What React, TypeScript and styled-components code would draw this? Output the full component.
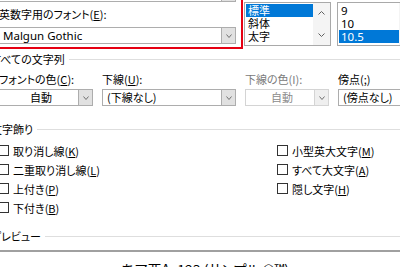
import * as React from "react"
import styled, { createGlobalStyle } from "styled-components"

const GlobalStyle = createGlobalStyle`
  html, body {
    margin: 0;
    padding: 0;
    background: #ffffff;
  }
  body {
    font-family: "Noto Sans CJK JP", "Noto Sans", sans-serif;
    font-size: 11px;
    color: #000000;
  }
`

const Viewport = styled.div`
  width: 400px;
  height: 267px;
  overflow: hidden;
  background: #ffffff;
`

const Dialog = styled.div`
  margin-left: -14px;
  width: 440px;
  line-height: 14px;
  font-feature-settings: "palt";
`

const FontRow = styled.div`
  display: flex;
  align-items: flex-start;
  margin-top: -20px;
`

const RedFrame = styled.div`
  margin-left: 6px;
  width: 237px;
  padding: 3px 5px;
  border: 2px solid #e60012;
  display: flex;
  flex-direction: column;
`

const Label = styled.div<{ $disabled?: boolean; $gap?: number }>`
  height: 14px;
  margin-top: ${(p) => p.$gap ?? 0}px;
  white-space: nowrap;
  color: ${(p) => (p.$disabled ? "#7a7a7a" : "#000000")};
`

const Key = styled.span`
  text-decoration: underline;
  text-underline-offset: 1px;
`

const Combo = styled.div<{ $disabled?: boolean; $gap?: number }>`
  box-sizing: border-box;
  height: 17px;
  display: flex;
  margin-top: ${(p) => p.$gap ?? 0}px;
  border: 1px solid ${(p) => (p.$disabled ? "#d4d4d4" : "#adadad")};
  background: #ffffff;
`

const ComboValue = styled.div<{ $center?: boolean; $disabled?: boolean }>`
  flex: 1;
  padding-left: 4px;
  line-height: 15px;
  white-space: nowrap;
  overflow: hidden;
  text-align: ${(p) => (p.$center ? "center" : "left")};
  color: ${(p) => (p.$disabled ? "#8c8c8c" : "#000000")};
`

const LatinValue = styled(ComboValue)`
  font-family: "Noto Sans", "Noto Sans CJK JP", sans-serif;
  font-size: 11.5px;
  padding-left: 3px;
`

const ComboButton = styled.div<{ $disabled?: boolean }>`
  width: 13px;
  display: flex;
  align-items: center;
  justify-content: center;
  border-left: 1px solid ${(p) => (p.$disabled ? "#d4d4d4" : "#adadad")};
  background: ${(p) => (p.$disabled ? "#efefef" : "#e1e1e1")};
`

const ListBox = styled.div<{ $width: number; $gap: number }>`
  box-sizing: border-box;
  width: ${(p) => p.$width}px;
  height: 44px;
  margin-top: 22px;
  margin-left: ${(p) => p.$gap}px;
  display: flex;
  border: 1px solid #a9a9a9;
  background: #ffffff;
`

const ListItems = styled.div`
  flex: 1;
  padding: 1px 0 0 1px;
`

const ListItem = styled.div<{ $selected?: boolean; $latin?: boolean }>`
  height: 13px;
  line-height: 13px;
  padding-left: 2px;
  white-space: nowrap;
  font-family: ${(p) =>
    p.$latin ? `"Noto Sans", sans-serif` : `"Noto Sans CJK JP", sans-serif`};
  font-size: ${(p) => (p.$latin ? "11.5px" : "11px")};
  background: ${(p) => (p.$selected ? "#0078d7" : "transparent")};
  color: ${(p) => (p.$selected ? "#ffffff" : "#000000")};
`

const ScrollBar = styled.div`
  width: 17px;
  display: flex;
  flex-direction: column;
  align-items: center;
  justify-content: space-between;
  padding: 8px 0 8px;
  background: #f4f4f4;
`

const GroupHeader = styled.div<{ $gap: number }>`
  display: flex;
  align-items: center;
  gap: 4px;
  height: 14px;
  margin-top: ${(p) => p.$gap}px;
  padding-left: 5px;
  white-space: nowrap;

  &::after {
    content: "";
    flex: 1;
    height: 1px;
    background: #dedede;
  }
`

const FieldGrid = styled.div`
  display: grid;
  grid-template-columns: 94px 134px 84px 80px;
  column-gap: 9px;
  margin-top: 6px;
  padding-left: 13px;
`

const Field = styled.div`
  display: flex;
  flex-direction: column;
  gap: 3px;
`

const EffectsRow = styled.div`
  display: flex;
  margin-top: 5px;
  padding-left: 12px;
`

const EffectsColumn = styled.div<{ $width?: number }>`
  width: ${(p) => (p.$width ? `${p.$width}px` : "auto")};
  display: flex;
  flex-direction: column;
`

const Check = styled.label`
  height: 19px;
  display: flex;
  align-items: center;
  gap: 4px;
  white-space: nowrap;
`

const CheckBox = styled.span`
  box-sizing: border-box;
  width: 11px;
  height: 11px;
  border: 1px solid #333333;
  background: #ffffff;
`

const Preview = styled.div`
  width: 412px;
  margin: 7px 0 0 13px;
  padding-top: 10px;
  height: 40px;
  border-top: 2px solid #a0a0a0;
  text-align: center;
  font-size: 14px;
  line-height: 14px;
`

const Chevron: React.FC<{ up?: boolean; small?: boolean }> = ({ up, small }) => {
  const w = small ? 6 : 7
  return (
    <svg width={w} height={4} viewBox={`0 0 ${w} 4`}>
      <path
        d={
          up
            ? `M0.5 3.5 L${w / 2} 0.5 L${w - 0.5} 3.5`
            : `M0.5 0.5 L${w / 2} 3.5 L${w - 0.5} 0.5`
        }
        fill="none"
        stroke={small ? "#707070" : "#606060"}
        strokeWidth={1}
      />
    </svg>
  )
}

const Dropdown: React.FC<{
  value: string
  center?: boolean
  disabled?: boolean
  gap?: number
  latin?: boolean
}> = ({ value, center, disabled, gap, latin }) => {
  const Value = latin ? LatinValue : ComboValue
  return (
    <Combo $disabled={disabled} $gap={gap}>
      <Value $center={center} $disabled={disabled}>
        {value}
      </Value>
      <ComboButton $disabled={disabled}>
        <Chevron small />
      </ComboButton>
    </Combo>
  )
}

const effectsLeft = [
  ["取り消し線", "K"],
  ["二重取り消し線", "L"],
  ["上付き", "P"],
  ["下付き", "B"],
]

const effectsRight = [
  ["小型英大文字", "M"],
  ["すべて大文字", "A"],
  ["隠し文字", "H"],
]

const App: React.FC = () => {
  return (
    <Viewport>
      <GlobalStyle />
      <Dialog>
        <FontRow>
          <RedFrame>
            <Dropdown value="" />
            <Label $gap={5}>
              英数字用のフォント(<Key>E</Key>):
            </Label>
            <Dropdown value="Malgun Gothic" gap={6} latin />
          </RedFrame>
          <ListBox $width={87} $gap={1}>
            <ListItems>
              <ListItem $selected>標準</ListItem>
              <ListItem>斜体</ListItem>
              <ListItem>太字</ListItem>
            </ListItems>
            <ScrollBar>
              <Chevron up />
              <Chevron />
            </ScrollBar>
          </ListBox>
          <ListBox $width={80} $gap={6}>
            <ListItems>
              <ListItem $latin>9</ListItem>
              <ListItem $latin>10</ListItem>
              <ListItem $latin $selected>
                10.5
              </ListItem>
            </ListItems>
            <ScrollBar>
              <Chevron up />
              <Chevron />
            </ScrollBar>
          </ListBox>
        </FontRow>

        <GroupHeader $gap={3}>すべての文字列</GroupHeader>
        <FieldGrid>
          <Field>
            <Label>
              フォントの色(<Key>C</Key>):
            </Label>
            <Dropdown value="自動" center />
          </Field>
          <Field>
            <Label>
              下線(<Key>U</Key>):
            </Label>
            <Dropdown value="(下線なし)" />
          </Field>
          <Field>
            <Label $disabled>下線の色(I):</Label>
            <Dropdown value="自動" center disabled />
          </Field>
          <Field>
            <Label>
              傍点(<Key>;</Key>)
            </Label>
            <Dropdown value="(傍点なし)" />
          </Field>
        </FieldGrid>

        <GroupHeader $gap={16}>文字飾り</GroupHeader>
        <EffectsRow>
          <EffectsColumn $width={279}>
            {effectsLeft.map(([text, key]) => (
              <Check key={key}>
                <CheckBox />
                <span>
                  {text}(<Key>{key}</Key>)
                </span>
              </Check>
            ))}
          </EffectsColumn>
          <EffectsColumn>
            {effectsRight.map(([text, key]) => (
              <Check key={key}>
                <CheckBox />
                <span>
                  {text}(<Key>{key}</Key>)
                </span>
              </Check>
            ))}
          </EffectsColumn>
        </EffectsRow>

        <GroupHeader $gap={12}>プレビュー</GroupHeader>
        <Preview>あア亜Ay123 (サンプル ©™)</Preview>
      </Dialog>
    </Viewport>
  )
}

export default App
